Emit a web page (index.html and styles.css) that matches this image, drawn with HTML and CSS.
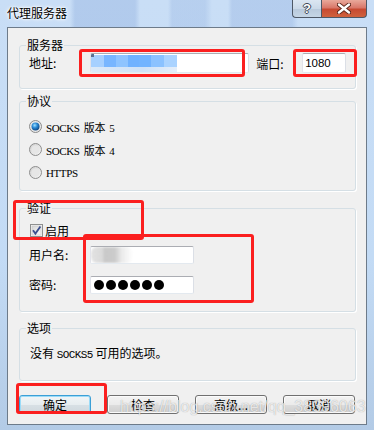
FILE: index.html
```html
<!DOCTYPE html>
<html lang="zh-CN">
<head>
    <meta charset="UTF-8">
    <meta name="viewport" content="width=device-width, initial-scale=1.0">
    <title>代理服务器</title>
    <link rel="stylesheet" href="styles.css">
</head>
<body>
    <div class="window">
        <div class="titlebar">
            <span class="title">代理服务器</span>
            <div class="caption-btns">
                <span class="cap help">?</span>
                <span class="cap close">
                    <svg width="14" height="11" viewBox="0 0 14 11">
                        <path d="M2 1.5 L12 9.5 M12 1.5 L2 9.5" stroke="#5a2418" stroke-width="4.2" stroke-linecap="round"/>
                        <path d="M2 1.5 L12 9.5 M12 1.5 L2 9.5" stroke="#fff" stroke-width="2.4" stroke-linecap="round"/>
                    </svg>
                </span>
            </div>
        </div>

        <div class="client">
            <fieldset class="group g-server">
                <legend>服务器</legend>
                <div class="row">
                    <label class="lbl">地址:</label>
                    <div class="textbox addr"><div class="mosaic"></div></div>
                    <label class="lbl-port">端口:</label>
                    <div class="textbox port">1080</div>
                </div>
            </fieldset>

            <fieldset class="group g-proto">
                <legend>协议</legend>
                <div class="opt">
                    <svg class="radio" width="13" height="13" viewBox="0 0 13 13">
                        <defs>
                            <radialGradient id="dot" cx="0.4" cy="0.35" r="0.7">
                                <stop offset="0" stop-color="#9fe0ff"/>
                                <stop offset="0.45" stop-color="#2a8ad6"/>
                                <stop offset="1" stop-color="#0b3f7a"/>
                            </radialGradient>
                        </defs>
                        <circle cx="6.5" cy="6.5" r="6" fill="#e9e9e9" stroke="#8a8a8a"/>
                        <circle cx="6.5" cy="6.5" r="4" fill="url(#dot)"/>
                    </svg>
                    <span class="opt-text">SOCKS 版本 5</span>
                </div>
                <div class="opt">
                    <svg class="radio" width="13" height="13" viewBox="0 0 13 13">
                        <defs>
                            <linearGradient id="rg" x1="0" y1="0" x2="1" y2="1">
                                <stop offset="0" stop-color="#cfcfcf"/>
                                <stop offset="1" stop-color="#f7f7f7"/>
                            </linearGradient>
                        </defs>
                        <circle cx="6.5" cy="6.5" r="6" fill="url(#rg)" stroke="#8e8e8e"/>
                        <circle cx="6.5" cy="6.5" r="4" fill="#e6e6e6"/>
                    </svg>
                    <span class="opt-text">SOCKS 版本 4</span>
                </div>
                <div class="opt">
                    <svg class="radio" width="13" height="13" viewBox="0 0 13 13">
                        <circle cx="6.5" cy="6.5" r="6" fill="url(#rg)" stroke="#8e8e8e"/>
                        <circle cx="6.5" cy="6.5" r="4" fill="#e6e6e6"/>
                    </svg>
                    <span class="opt-text">HTTPS</span>
                </div>
            </fieldset>

            <fieldset class="group g-auth">
                <legend>验证</legend>
                <div class="check-row">
                    <svg class="check" width="13" height="13" viewBox="0 0 13 13">
                        <defs>
                            <linearGradient id="cg" x1="0" y1="0" x2="1" y2="1">
                                <stop offset="0" stop-color="#d6d6d6"/>
                                <stop offset="1" stop-color="#fafafa"/>
                            </linearGradient>
                        </defs>
                        <rect x="0.5" y="0.5" width="12" height="12" fill="#f4f4f4" stroke="#8e8f8f"/>
                        <rect x="2" y="2" width="9" height="9" fill="url(#cg)" stroke="#c4c4c4" stroke-width="0.6"/>
                        <path d="M3 6.3 L5.4 9.6 L10.4 2.6" fill="none" stroke="#3b4f8e" stroke-width="1.8"/>
                    </svg>
                    <span>启用</span>
                </div>
                <div class="field">
                    <label class="lbl">用户名:</label>
                    <div class="textbox small"><div class="smudge"></div></div>
                </div>
                <div class="field pw">
                    <label class="lbl">密码:</label>
                    <div class="textbox small dots">
                        <span></span><span></span><span></span><span></span><span></span><span></span>
                    </div>
                </div>
            </fieldset>

            <fieldset class="group g-opts">
                <legend>选项</legend>
                <p class="note">没有 <span class="mono">SOCKS5</span> 可用的选项。</p>
            </fieldset>

            <div class="buttons">
                <button class="btn default">确定</button>
                <button class="btn">检查</button>
                <button class="btn">高级...</button>
                <button class="btn">取消</button>
            </div>
        </div>

        <div class="mark m-addr"></div>
        <div class="mark m-port"></div>
        <div class="mark m-enable"></div>
        <div class="mark m-login"></div>
        <div class="mark m-ok"></div>

        <div class="watermark">https://blog.csdn.net/qq_38396063</div>
    </div>
</body>
</html>
```

FILE: styles.css
```css
* {
    box-sizing: border-box;
}
body {
    margin: 0;
    padding: 0;
}
.window {
    position: relative;
    width: 374px;
    height: 430px;
    overflow: hidden;
    display: flex;
    flex-direction: column;
    padding: 0 7px 5px 7px;
    font-family: "Noto Sans CJK SC", sans-serif;
    font-size: 12px;
    color: #000;
    background:
        linear-gradient(90deg, rgba(150, 180, 225, 0) 0, rgba(150, 180, 225, 0) 70px,
            rgba(150, 180, 225, 0.45) 75px, rgba(150, 180, 225, 0.45) 135px,
            rgba(150, 180, 225, 0) 140px, rgba(150, 180, 225, 0) 168px,
            rgba(150, 180, 225, 0.35) 172px, rgba(150, 180, 225, 0.35) 205px,
            rgba(150, 180, 225, 0) 212px, rgba(150, 180, 225, 0) 228px,
            rgba(150, 180, 225, 0.4) 232px, rgba(150, 180, 225, 0.4) 292px,
            rgba(150, 180, 225, 0) 298px) 0 0 / 100% 27px no-repeat,
        linear-gradient(180deg, #c9def6 0, #c3dbf5 60%, #b3cbe6 100%);
}
.titlebar {
    height: 27px;
    display: flex;
    justify-content: space-between;
    align-items: flex-start;
}
.title {
    padding-top: 5px;
    line-height: 16px;
    text-shadow: 0 0 5px #fff, 0 0 3px #fff, 0 0 2px #fff;
}
.caption-btns {
    display: flex;
}
.cap {
    height: 18px;
    display: flex;
    justify-content: center;
    align-items: center;
    border: 1px solid #4e5866;
    border-top: none;
}
.help {
    width: 29px;
    border-right: none;
    border-bottom-left-radius: 4px;
    background: linear-gradient(180deg, #dbe6f2 0%, #cbd9e8 50%, #b8c9db 51%, #c6d6e6 100%);
    color: #fff;
    font-family: "Liberation Sans", sans-serif;
    font-weight: bold;
    font-size: 13px;
    text-shadow: 1px 0 0 #3e4654, -1px 0 0 #3e4654, 0 1px 0 #3e4654, 0 -1px 0 #3e4654;
}
.close {
    width: 46px;
    border-bottom-right-radius: 4px;
    background: linear-gradient(180deg, #e9a99b 0%, #d9786a 45%, #c74a32 55%, #d0623d 100%);
}
.client {
    flex: 1;
    border: 1px solid #6d7b8a;
    background: #f0f0f0;
    padding: 9px 10px 0 11px;
}
.group {
    margin: 0;
    min-width: 0;
    border: 1px solid #d5dfe5;
    border-radius: 3px;
    box-shadow: 1px 1px 0 #fff;
    padding: 0 9px;
}
.group legend {
    padding: 0 1px;
    margin-left: -3px;
    line-height: 16px;
}
.g-server {
    padding-bottom: 15px;
}
.g-proto {
    margin-top: 4px;
    padding-top: 6px;
    padding-bottom: 6px;
}
.g-auth {
    margin-top: 9px;
    padding-top: 5px;
    padding-bottom: 17px;
}
.g-opts {
    margin-top: 8px;
    padding-top: 9px;
    padding-bottom: 17px;
}
.row {
    display: flex;
    align-items: center;
    height: 20px;
}
.lbl {
    width: 61px;
    line-height: 16px;
}
.lbl-port {
    margin-left: 7px;
    width: 46px;
}
.textbox {
    position: relative;
    background: #fff;
    border: 1px solid;
    border-color: #abadb3 #dbdfe6 #e3e9ef #e2e3ea;
    border-radius: 2px;
    overflow: hidden;
}
.addr {
    width: 160px;
    height: 20px;
}
.port {
    width: 44px;
    height: 20px;
    padding-left: 2px;
    font-family: "Liberation Sans", sans-serif;
    font-size: 11.5px;
    line-height: 18px;
}
.mosaic {
    width: 86px;
    height: 18px;
    background:
        linear-gradient(90deg, #a6d0ff 0, #a6d0ff 13px, #78b6ff 13px, #78b6ff 25px,
            #8ec4ff 25px, #8ec4ff 37px, #70b2ff 37px, #70b2ff 48px,
            #72b4ff 48px, #72b4ff 60px, #8bc2ff 60px, #8bc2ff 73px,
            #aad3ff 73px, #aad3ff 86px) 0 1px / 100% 12px no-repeat,
        linear-gradient(90deg, #dbe9f8, #cfe2f7 60%, #e4eefa) 0 13px / 100% 5px no-repeat;
    filter: blur(0.4px);
}
.mosaic::before {
    content: "";
    position: absolute;
    left: 0;
    top: 0;
    width: 3px;
    height: 3px;
    background: #5a7090;
}
.opt {
    display: flex;
    align-items: center;
    height: 23px;
}
.radio {
    flex: none;
}
.opt-text {
    margin-left: 4px;
    font-family: "Liberation Serif", "Noto Sans CJK SC", serif;
    font-size: 11px;
    letter-spacing: -0.4px;
    word-spacing: 2px;
}
.mono {
    font-family: "Liberation Mono", "Noto Sans CJK SC", monospace;
    font-size: 11px;
    letter-spacing: -0.6px;
}
.check-row {
    display: flex;
    align-items: center;
    height: 19px;
}
.check {
    margin-left: 1px;
    margin-right: 2px;
}
.field {
    display: flex;
    align-items: center;
    margin-top: 6px;
}
.field.pw {
    margin-top: 12px;
}
.small {
    width: 104px;
    height: 18px;
}
.smudge {
    width: 42px;
    height: 16px;
    background: linear-gradient(90deg, #e2e2e2 0, #d9d9d9 12px, #c9c9c9 13px, #cbcbcb 24px, #e9e9e9 30px, rgba(255, 255, 255, 0) 42px);
    border-radius: 6px;
    filter: blur(1px);
}
.dots {
    display: flex;
    align-items: center;
    gap: 2px;
    padding-left: 3px;
}
.dots span {
    width: 10px;
    height: 10px;
    border-radius: 50%;
    background: #000;
}
.note {
    margin: 0 0 0 1px;
    line-height: 16px;
}
.buttons {
    display: flex;
    justify-content: space-between;
    margin-top: 14px;
    margin-right: 1px;
}
.btn {
    width: 72px;
    height: 19px;
    padding: 0;
    font-family: "Noto Sans CJK SC", sans-serif;
    font-size: 12px;
    line-height: 16px;
    color: #000;
    border: 1px solid #707070;
    border-radius: 3px;
    background: linear-gradient(180deg, #f3f3f3 0%, #ebebeb 50%, #dddddd 51%, #cfcfcf 100%);
    box-shadow: inset 0 0 0 1px #fbfbfb;
}
.btn.default {
    border-color: #3c9fd6;
    background: linear-gradient(180deg, #f1f5f7 0%, #e7edf0 50%, #d8e0e5 51%, #cfd8de 100%);
    box-shadow: inset 0 0 0 1px #9adbf8;
}
.mark {
    position: absolute;
    border: 3px solid #fb1f1f;
    border-radius: 3px;
}
.m-addr {
    left: 79px;
    top: 49px;
    width: 166px;
    height: 28px;
}
.m-port {
    left: 293px;
    top: 49px;
    width: 64px;
    height: 28px;
}
.m-enable {
    left: 13px;
    top: 200px;
    width: 131px;
    height: 40px;
}
.m-login {
    left: 83px;
    top: 234px;
    width: 171px;
    height: 69px;
}
.m-ok {
    left: 16px;
    top: 383px;
    width: 91px;
    height: 31px;
}
.watermark {
    position: absolute;
    left: 120px;
    top: 397px;
    font-family: "Liberation Sans", sans-serif;
    font-size: 16px;
    line-height: 20px;
    color: rgba(255, 255, 255, 0.75);
    text-shadow: 0 0 1px rgba(0, 0, 0, 0.35);
    white-space: nowrap;
}
```
